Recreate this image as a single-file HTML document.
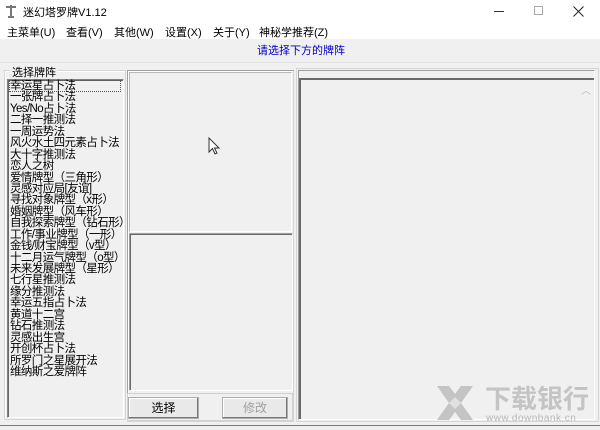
<!DOCTYPE html>
<html><head><meta charset="utf-8"><style>
*{margin:0;padding:0;box-sizing:border-box}
body{width:600px;height:430px;overflow:hidden;background:#f0f0f0;font-family:"Liberation Sans","Noto Sans CJK SC",sans-serif;font-size:11px;color:#000;position:relative}
.abs{position:absolute}
#title{left:0;top:0;width:600px;height:22px;background:#fff}
#menu{left:0;top:22px;width:600px;height:17px;background:#fff}
.grp{border:1px solid #d5d5d5;box-shadow:inset 1px 1px 0 #fff}
.btn{background:#e9e9e9;border:1px solid #adadad;text-align:center;line-height:20px;font-size:12px;box-shadow:inset -1px -1px 0 #777, inset 1px 1px 0 #fff}
#list div{height:11.45px;line-height:11.45px;font-size:11.5px;white-space:nowrap;letter-spacing:-0.6px}
</style></head><body>
<div id="title" class="abs">
 <svg class="abs" style="left:4px;top:4px" width="14" height="14"><path d="M2 3h10M7 1v12M4 13h6" stroke="#777" stroke-width="2"/></svg>
 <div class="abs" style="left:23px;top:4px;font-size:11px">迷幻塔罗牌V1.12</div>
 <div class="abs" style="left:494px;top:11px;width:10px;height:1px;background:#333"></div>
 <div class="abs" style="left:534px;top:6px;width:9px;height:9px;border:1px solid #aaa"></div>
 <svg class="abs" style="left:573px;top:6px" width="11" height="11"><path d="M0.5 0.5L10.5 10.5M10.5 0.5L0.5 10.5" stroke="#222" stroke-width="1"/></svg>
</div>
<div id="menu" class="abs">
 <span class="abs" style="left:7px;top:2px">主菜单(U)</span>
 <span class="abs" style="left:66px;top:2px">查看(V)</span>
 <span class="abs" style="left:114px;top:2px">其他(W)</span>
 <span class="abs" style="left:165px;top:2px">设置(X)</span>
 <span class="abs" style="left:213px;top:2px">关于(Y)</span>
 <span class="abs" style="left:259px;top:2px">神秘学推荐(Z)</span>
</div>
<div class="abs" style="left:0;top:62px;width:600px;height:1px;background:#e3e3e3"></div>
<div class="abs" style="left:257px;top:42px;color:#0000c8">请选择下方的牌阵</div>
<div class="abs grp" style="left:4px;top:70px;width:122px;height:350px"></div>
<div class="abs" style="left:10px;top:64px;background:#f0f0f0;padding:0 2px">选择牌阵</div>
<div class="abs" style="left:7px;top:79px;width:117px;height:339px;border:1px solid #828282;border-right-color:#fff;border-bottom-color:#fff;box-shadow:inset 1px 1px 0 #696969"></div>
<div class="abs" style="left:9px;top:80px;width:112px;height:12px;border:1px dotted #555"></div>
<div id="list" class="abs" style="left:10px;top:81px">
<div>幸运星占卜法</div><div>一张牌占卜法</div><div>Yes/No占卜法</div><div>二择一推测法</div><div>一周运势法</div><div>风火水土四元素占卜法</div><div>大十字推测法</div><div>恋人之树</div><div>爱情牌型（三角形）</div><div>灵感对应局[友谊]</div><div>寻找对象牌型（x形）</div><div>婚姻牌型（风车形）</div><div>自我探索牌型（钻石形）</div><div>工作/事业牌型（一形）</div><div>金钱/财宝牌型（v型）</div><div>十二月运气牌型（o型）</div><div>未来发展牌型（星形）</div><div>七行星推测法</div><div>缘分推测法</div><div>幸运五指占卜法</div><div>黄道十二宫</div><div>钻石推测法</div><div>灵感出生宫</div><div>开创杯占卜法</div><div>所罗门之星展开法</div><div>维纳斯之爱牌阵</div>
</div>
<div class="abs grp" style="left:127px;top:70px;width:167px;height:352px"></div>
<div class="abs" style="left:127px;top:70px;width:167px;height:1px;background:#a0a0a0"></div>
<div class="abs" style="left:127px;top:70px;width:1px;height:350px;background:#a0a0a0"></div>
<div class="abs" style="left:129px;top:72px;width:163px;height:160px;border:1px solid #b8b8b8;border-right-color:#fff;border-bottom-color:#fff"></div>
<div class="abs" style="left:129px;top:233px;width:164px;height:158px;border:1px solid #a0a0a0;border-right-color:#fff;border-bottom-color:#fff;box-shadow:inset 1px 1px 0 #696969"></div>
<div class="abs" style="left:127px;top:393px;width:166px;height:28px;border:1px solid #d0d0d0"></div>
<div class="abs btn" style="left:128px;top:397px;width:71px;height:22px">选择</div>
<div class="abs btn" style="left:222px;top:397px;width:66px;height:22px;color:#a0a0a0">修改</div>
<svg class="abs" style="left:208px;top:137px" width="13" height="19"><path d="M1 1v14l3.5-3.5 2.5 5.5 2-1-2.5-5h4.5z" fill="#fff" stroke="#333"/></svg>
<div class="abs" style="left:296px;top:68px;width:303px;height:354px;border:1px solid #d5d5d5"></div>
<div class="abs" style="left:298px;top:70px;width:297px;height:350px;border:1px solid #a0a0a0;border-right-color:#fff;border-bottom-color:#fff"></div>
<div class="abs" style="left:299px;top:78px;width:295px;height:341px;border-top:2px solid #696969;border-left:2px solid #696969"></div>
<div class="abs" style="left:581px;top:82px;color:#bbb;font-size:10px">︿</div>
<svg class="abs" style="left:435px;top:384px" width="40" height="38"><path d="M2 2h12l6 8 6-8h12l-12 17 12 17h-12l-6-8-6 8H2l12-17z" fill="#c4c4c4"/><path d="M14 19l6-6 6 6-6 6z" fill="#e0e0e0"/></svg>
<div class="abs" style="left:485px;top:379px;font-size:26px;font-weight:bold;color:#c4c4c4;letter-spacing:0px">下载银行</div>
<div class="abs" style="left:486px;top:413px;font-size:10px;color:#b8b8b8;letter-spacing:0.5px">www.downbank.cn</div>
<div class="abs" style="left:0;top:425px;width:600px;height:1px;background:#777"></div>
</body></html>
